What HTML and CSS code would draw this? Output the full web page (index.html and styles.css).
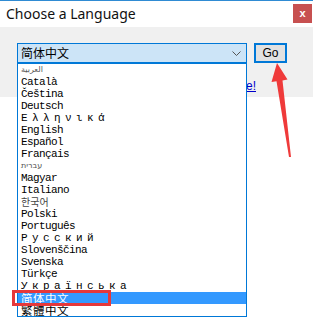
FILE: index.html
```html
<!DOCTYPE html>
<html>
<head lang="en">
    <meta charset="UTF-8">
    <title>Choose a Language</title>
    <link rel="stylesheet" href="styles.css">
</head>
<body>
<div class="window">
    <div class="titlebar">
        <span class="title">Choose a Language</span>
        <span class="close">x</span>
    </div>
    <div class="panel">
        <div class="controls">
            <div class="select">
                <span class="select-text">简体中文</span>
                <svg class="chevron" width="9" height="5" viewBox="0 0 9 5"><path d="M0.5 0.5 L4.5 4.5 L8.5 0.5" fill="none" stroke="#555" stroke-width="1"/></svg>
            </div>
            <button class="go">Go</button>
        </div>
        <a class="hint" href="javascript:">Help translate this page!</a>
    </div>
    <ul class="options">
        <li class="small">العربية</li>
        <li>Català</li>
        <li>Čeština</li>
        <li>Deutsch</li>
        <li class="wide">Ελληνικά</li>
        <li>English</li>
        <li>Español</li>
        <li>Français</li>
        <li class="small">עברית</li>
        <li>Magyar</li>
        <li>Italiano</li>
        <li class="ko">한국어</li>
        <li>Polski</li>
        <li>Português</li>
        <li class="wide">Русский</li>
        <li>Slovenščina</li>
        <li>Svenska</li>
        <li>Türkçe</li>
        <li class="wide">Українська</li>
        <li class="cjk current">简体中文</li>
        <li class="cjk">繁體中文</li>
    </ul>
    <div class="mark"></div>
    <svg class="arrow" width="313" height="318" viewBox="0 0 313 318">
        <polygon points="277,63 287.5,79.5 282.5,80.5 291,157 289,157 276.5,81.2 271.5,82" fill="#ef3a3a"/>
    </svg>
</div>
</body>
</html>
```

FILE: styles.css
```css
body{
    margin: 0;
}
.window{
    position: relative;
    width: 313px;
    height: 318px;
    overflow: hidden;
    background: #fff;
}
.titlebar{
    box-sizing: border-box;
    height: 27px;
    border-top: 1px solid #2f8bd3;
    display: flex;
    align-items: flex-start;
}
.title{
    font-family: "Noto Sans", sans-serif;
    font-size: 14px;
    line-height: 26px;
    color: #111;
    padding-left: 6px;
}
.close{
    margin-left: auto;
    margin-right: 1px;
    margin-top: 3px;
    width: 19px;
    height: 19px;
    background: #c75050;
    color: #fff;
    font-family: "Liberation Sans", sans-serif;
    font-weight: bold;
    font-size: 11px;
    line-height: 18px;
    text-align: center;
}
.panel{
    box-sizing: border-box;
    height: 70px;
    background: #f0f0f0;
    padding: 16px 0 0 17px;
}
.controls{
    display: flex;
    gap: 7px;
}
.select{
    box-sizing: border-box;
    width: 230px;
    height: 20px;
    border: 1px solid #0078d7;
    background: #cce4f7;
    display: flex;
    align-items: center;
    padding: 0 5px 0 3px;
}
.select-text{
    font-family: "Noto Sans CJK SC", sans-serif;
    font-size: 12px;
    line-height: 18px;
    color: #000;
}
.chevron{
    margin-left: auto;
}
.go{
    box-sizing: border-box;
    width: 33px;
    height: 20px;
    border: 2px solid #0078d7;
    background: #e1e1e1;
    padding: 0;
    font-family: "Liberation Sans", sans-serif;
    font-size: 12px;
    color: #000;
}
.hint{
    display: block;
    margin-top: 16px;
    padding-right: 57px;
    text-align: right;
    font-family: "Liberation Sans", sans-serif;
    font-size: 12px;
    color: #0000cc;
}
.options{
    position: absolute;
    left: 17px;
    top: 63px;
    box-sizing: border-box;
    width: 230px;
    margin: 0;
    padding: 0;
    list-style: none;
    background: #fff;
    border: 1px solid #0078d7;
}
.options li{
    height: 12px;
    line-height: 12px;
    padding-left: 3px;
    font-family: "Liberation Mono", monospace;
    font-size: 11px;
    letter-spacing: -0.6px;
    color: #000;
    white-space: nowrap;
}
.options li.small{
    font-family: "DejaVu Sans", sans-serif;
    font-size: 8px;
    letter-spacing: 0;
    color: #555;
}
.options li.wide{
    letter-spacing: 4.4px;
}
.options li.ko{
    font-family: "Noto Sans CJK KR", sans-serif;
    font-size: 10px;
    letter-spacing: 0;
    color: #444;
}
.options li.cjk{
    font-family: "Noto Sans CJK SC", sans-serif;
    font-size: 11.5px;
    letter-spacing: 0.5px;
}
.options li.current{
    background: #3399ff;
    color: #fff;
}
.mark{
    position: absolute;
    left: 12px;
    top: 290px;
    box-sizing: border-box;
    width: 99px;
    height: 16px;
    border: 3px solid #e5383b;
}
.arrow{
    position: absolute;
    left: 0;
    top: 0;
    pointer-events: none;
}
```
